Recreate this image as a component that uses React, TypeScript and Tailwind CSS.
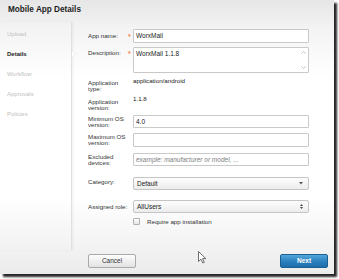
import React from "react";

function Label({ children, nowrap }: { children: React.ReactNode; nowrap?: boolean }) {
  return (
    <div className={`text-[6.2px] leading-[6px] text-[#333] ${nowrap ? "whitespace-nowrap" : ""}`}>
      {children}
    </div>
  );
}

function Star({ show }: { show?: boolean }) {
  return (
    <div className="flex justify-start items-center h-[6px]">
      {show ? <span className="text-[7px] leading-[6px] text-[#f28a4c] font-bold translate-y-[1px]">*</span> : null}
    </div>
  );
}

function Input({ value, placeholder, h = "h-[13px]" }: { value?: string; placeholder?: string; h?: string }) {
  return (
    <div
      className={`${h} border border-[#c9c9c9] rounded-[1px] bg-white flex items-center pl-[2px] text-[6.5px] ${
        placeholder ? "italic text-[#808080]" : "text-[#222]"
      }`}
    >
      {value ?? placeholder}
    </div>
  );
}

function Select({ value, updown }: { value: string; updown?: boolean }) {
  return (
    <div className="h-[13px] border border-[#c4c4c4] rounded-[2px] bg-[linear-gradient(to_bottom,#fdfdfd,#ececec)] flex items-center justify-between pl-[3px] pr-[5px] text-[6.5px] text-[#222]">
      <span>{value}</span>
      {updown ? (
        <svg width="3" height="5" viewBox="0 0 3 5">
          <path d="M1.5 0 L3 2 L0 2 Z M0 3 L3 3 L1.5 5 Z" fill="#444" />
        </svg>
      ) : (
        <svg width="4" height="3" viewBox="0 0 4 3">
          <path d="M0 0 L4 0 L2 2.5 Z" fill="#555" />
        </svg>
      )}
    </div>
  );
}

const row = "grid grid-cols-[40px_5px_176px]";

export default function App() {
  const nav = ["Upload", "Details", "Workflow", "Approvals", "Policies"];
  return (
    <div className="w-[339px] h-[279px] bg-white overflow-hidden relative font-['Liberation_Sans',Arial,sans-serif]">
      <div className="w-[334px] h-[274px] flex flex-col shadow-[3px_3px_2px_rgba(0,0,0,0.85)] bg-[linear-gradient(to_bottom,#e6e6e6_0%,#f3f3f3_10%,#ffffff_28%,#ffffff_72%,#ececec_100%)]">
        <div className="h-[22px] flex items-center pb-[2px] pl-[8px] text-[8.2px] font-bold text-[#1e1e1e]">
          Mobile App Details
        </div>
        <div className="flex h-[228px]">
          <div className="w-[72px] relative border-r border-[#e0e0e0] shadow-[1px_0_2px_rgba(0,0,0,0.06)] pt-[2px] flex flex-col">
            {nav.map((n) => (
              <div
                key={n}
                className={`h-[20px] flex items-center pl-[7px] text-[6px] relative ${
                  n === "Details" ? "font-bold text-[#222]" : "text-[#c0c0c0]"
                }`}
              >
                {n}
                {n === "Details" && (
                  <svg className="absolute right-[-5px] top-[7px]" width="4" height="6" viewBox="0 0 4 6">
                    <path d="M0 0 L3.5 3 L0 6 Z" fill="#ffffff" />
                    <path d="M0 0 L3.5 3 L0 6" fill="none" stroke="#dadada" strokeWidth="0.5" />
                  </svg>
                )}
              </div>
            ))}
          </div>
          <div className="flex-1 pl-[16px] flex flex-col">
            <div className={`${row} mt-[7px] items-center`}>
              <Label nowrap>App name:</Label>
              <Star show />
              <Input value="WorxMail" h="h-[14px]" />
            </div>
            <div className={`${row} mt-[4px] items-start`}>
              <div className="pt-[3px]">
                <Label nowrap>Description:</Label>
              </div>
              <div className="pt-[3px]">
                <Star show />
              </div>
              <div className="h-[26px] border border-[#c9c9c9] rounded-[1px] bg-white flex justify-between pl-[2px] pt-[2px] pr-[2px] text-[6.5px] text-[#222] leading-[7px]">
                <span>WorxMail 1.1.8</span>
                <div className="flex flex-col justify-between pb-[3px] pt-[1px]">
                  <svg width="5" height="3" viewBox="0 0 5 3">
                    <path d="M0.5 2.5 L2.5 0.5 L4.5 2.5" fill="none" stroke="#a8a8a8" strokeWidth="0.7" />
                  </svg>
                  <svg width="5" height="3" viewBox="0 0 5 3">
                    <path d="M0.5 0.5 L2.5 2.5 L4.5 0.5" fill="none" stroke="#a8a8a8" strokeWidth="0.7" />
                  </svg>
                </div>
              </div>
            </div>
            <div className={`${row} mt-[5px] h-[17px] items-start`}>
              <div className="pt-[2px]">
                <Label>Application type:</Label>
              </div>
              <div />
              <div className="text-[6.2px] leading-[6px] text-[#222]">application/android</div>
            </div>
            <div className={`${row} mt-[1px] h-[17px] items-start`}>
              <div className="pt-[3px]">
                <Label>Application version:</Label>
              </div>
              <div />
              <div className="text-[6.2px] leading-[6px] text-[#222]">1.1.8</div>
            </div>
            <div className={`${row} mt-[2px] items-center`}>
              <Label>Minimum OS version:</Label>
              <div />
              <Input value="4.0" />
            </div>
            <div className={`${row} mt-[5px] items-center`}>
              <Label>Maximum OS version:</Label>
              <div />
              <Input value="" h="h-[14px]" />
            </div>
            <div className={`${row} mt-[6px] items-center`}>
              <Label>Excluded devices:</Label>
              <div />
              <Input placeholder="example: manufacturer or model, ..." />
            </div>
            <div className={`${row} mt-[11px] items-start`}>
              <div className="pt-[2px]">
                <Label nowrap>Category:</Label>
              </div>
              <div />
              <Select value="Default" />
            </div>
            <div className={`${row} mt-[10px] items-center`}>
              <Label nowrap>Assigned role:</Label>
              <div />
              <Select value="AllUsers" updown />
            </div>
            <div className={`${row} mt-[4px] items-center`}>
              <div />
              <div />
              <div className="flex items-center gap-[7px]">
                <div className="w-[7px] h-[7px] border border-[#b0b0b0] rounded-[1px] bg-[linear-gradient(to_bottom,#ffffff,#e4e4e4)]" />
                <span className="text-[6.2px] text-[#333]">Require app installation</span>
              </div>
            </div>
          </div>
        </div>
        <div className="flex justify-between pl-[88px] pr-[6px] pt-[4px]">
          <div className="w-[48px] h-[14px] border border-[#a9a9a9] rounded-[2px] bg-[linear-gradient(to_bottom,#fdfdfd,#e2e2e2)] flex items-center justify-center text-[6.5px] text-[#333]">
            Cancel
          </div>
          <div className="w-[48px] h-[14px] border border-[#1c5f92] rounded-[2px] bg-[linear-gradient(to_bottom,#53a7dc,#2a7fbd_55%,#1f6dab)] flex items-center justify-center text-[6.5px] font-bold text-white">
            Next
          </div>
        </div>
      </div>
      <svg className="absolute left-[198px] top-[251px]" width="9" height="13" viewBox="0 0 9 13">
        <path
          d="M0.5 0.5 L0.5 10.5 L3 8.2 L4.8 12 L6.3 11.3 L4.6 7.6 L7.8 7.6 Z"
          fill="#ffffff"
          stroke="#333"
          strokeWidth="0.7"
          strokeLinejoin="round"
        />
      </svg>
    </div>
  );
}
